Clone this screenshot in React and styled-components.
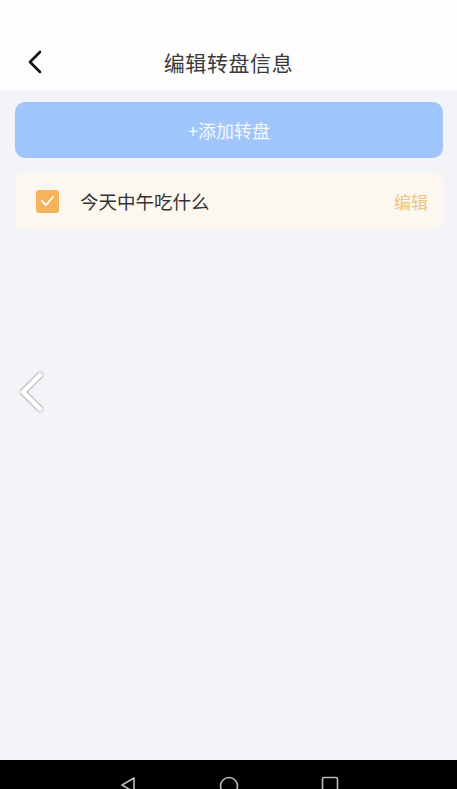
import React from 'react'
import styled, { createGlobalStyle } from 'styled-components'

const GlobalStyle = createGlobalStyle`
  html, body {
    margin: 0;
    padding: 0;
    background: #f3f4f8;
  }
  body {
    font-family: "Noto Sans CJK SC", "Noto Sans", sans-serif;
  }
`

const Screen = styled.div`
  width: 457px;
  height: 789px;
  display: flex;
  flex-direction: column;
  background: #f3f4f8;
  overflow: hidden;
  position: relative;
`

const Header = styled.div`
  height: 90px;
  background: #fdfdfd;
  display: flex;
  align-items: flex-end;
  flex-shrink: 0;
`

const HeaderBar = styled.div`
  height: 56px;
  width: 100%;
  display: grid;
  grid-template-columns: 70px 1fr 70px;
  align-items: center;
`

const BackButton = styled.div`
  display: flex;
  align-items: center;
  padding-left: 26px;
`

const Title = styled.div`
  text-align: center;
  font-size: 21px;
  color: #3a3a3a;
  letter-spacing: 0.6px;
`

const Body = styled.div`
  flex: 1;
  padding: 12px 14px 0 15px;
  display: flex;
  flex-direction: column;
  gap: 15px;
`

const AddButton = styled.div`
  height: 56px;
  border-radius: 10px;
  background: #a0c5fb;
  color: #f4f8ff;
  font-size: 18px;
  display: flex;
  align-items: center;
  justify-content: center;
`

const Item = styled.div`
  height: 56px;
  border-radius: 9px;
  background: #fdf8ef;
  display: flex;
  align-items: center;
  padding: 0 15px 0 21px;
`

const Check = styled.div`
  width: 23px;
  height: 23px;
  border-radius: 3px;
  background: #f6b35d;
  display: flex;
  align-items: center;
  justify-content: center;
  margin-right: 21px;
`

const ItemName = styled.div`
  flex: 1;
  font-size: 18.5px;
  color: #333;
`

const EditLink = styled.div`
  font-size: 17px;
  color: #eec286;
`

const EdgeBack = styled.div`
  position: absolute;
  left: 15px;
  top: 369px;
`

const NavBar = styled.div`
  background: #000;
  flex-shrink: 0;
  display: flex;
  justify-content: center;
  align-items: flex-start;
  gap: 82px;
  padding-top: 16px;
  height: 13px;
  margin-top: auto;
`

export default function App() {
  return (
    <>
      <GlobalStyle />
      <Screen>
        <Header>
          <HeaderBar>
            <BackButton>
              <svg width="18" height="24" viewBox="0 0 18 24">
                <path d="M14 2 L4 12 L14 22" fill="none" stroke="#111" strokeWidth="2.6" strokeLinecap="round" strokeLinejoin="round" />
              </svg>
            </BackButton>
            <Title>编辑转盘信息</Title>
            <div />
          </HeaderBar>
        </Header>
        <Body>
          <AddButton>+添加转盘</AddButton>
          <Item>
            <Check>
              <svg width="15" height="12" viewBox="0 0 15 12">
                <path d="M2 6 L6 10 L13 2" fill="none" stroke="#fff" strokeWidth="1.8" strokeLinecap="round" strokeLinejoin="round" />
              </svg>
            </Check>
            <ItemName>今天中午吃什么</ItemName>
            <EditLink>编辑</EditLink>
          </Item>
        </Body>
        <EdgeBack>
          <svg width="34" height="46" viewBox="0 0 34 46">
            <defs>
              <filter id="sh" x="-50%" y="-50%" width="200%" height="200%">
                <feDropShadow dx="0" dy="0" stdDeviation="1.3" floodColor="#333" floodOpacity="0.9" />
              </filter>
            </defs>
            <path d="M25 6 L8 23 L25 40" fill="none" stroke="#fff" strokeWidth="4.5" strokeLinecap="round" strokeLinejoin="round" filter="url(#sh)" />
          </svg>
        </EdgeBack>
        <NavBar>
          <svg width="18" height="18" viewBox="0 0 18 18">
            <path d="M15 2 L3 9 L15 16 Z" fill="none" stroke="#bbb" strokeWidth="1.6" strokeLinejoin="round" />
          </svg>
          <svg width="20" height="20" viewBox="0 0 20 20">
            <circle cx="10" cy="10" r="8.5" fill="none" stroke="#bbb" strokeWidth="1.6" />
          </svg>
          <svg width="18" height="18" viewBox="0 0 18 18">
            <rect x="1.5" y="1.5" width="15" height="15" rx="1.5" fill="none" stroke="#bbb" strokeWidth="1.6" />
          </svg>
        </NavBar>
      </Screen>
    </>
  )
}
